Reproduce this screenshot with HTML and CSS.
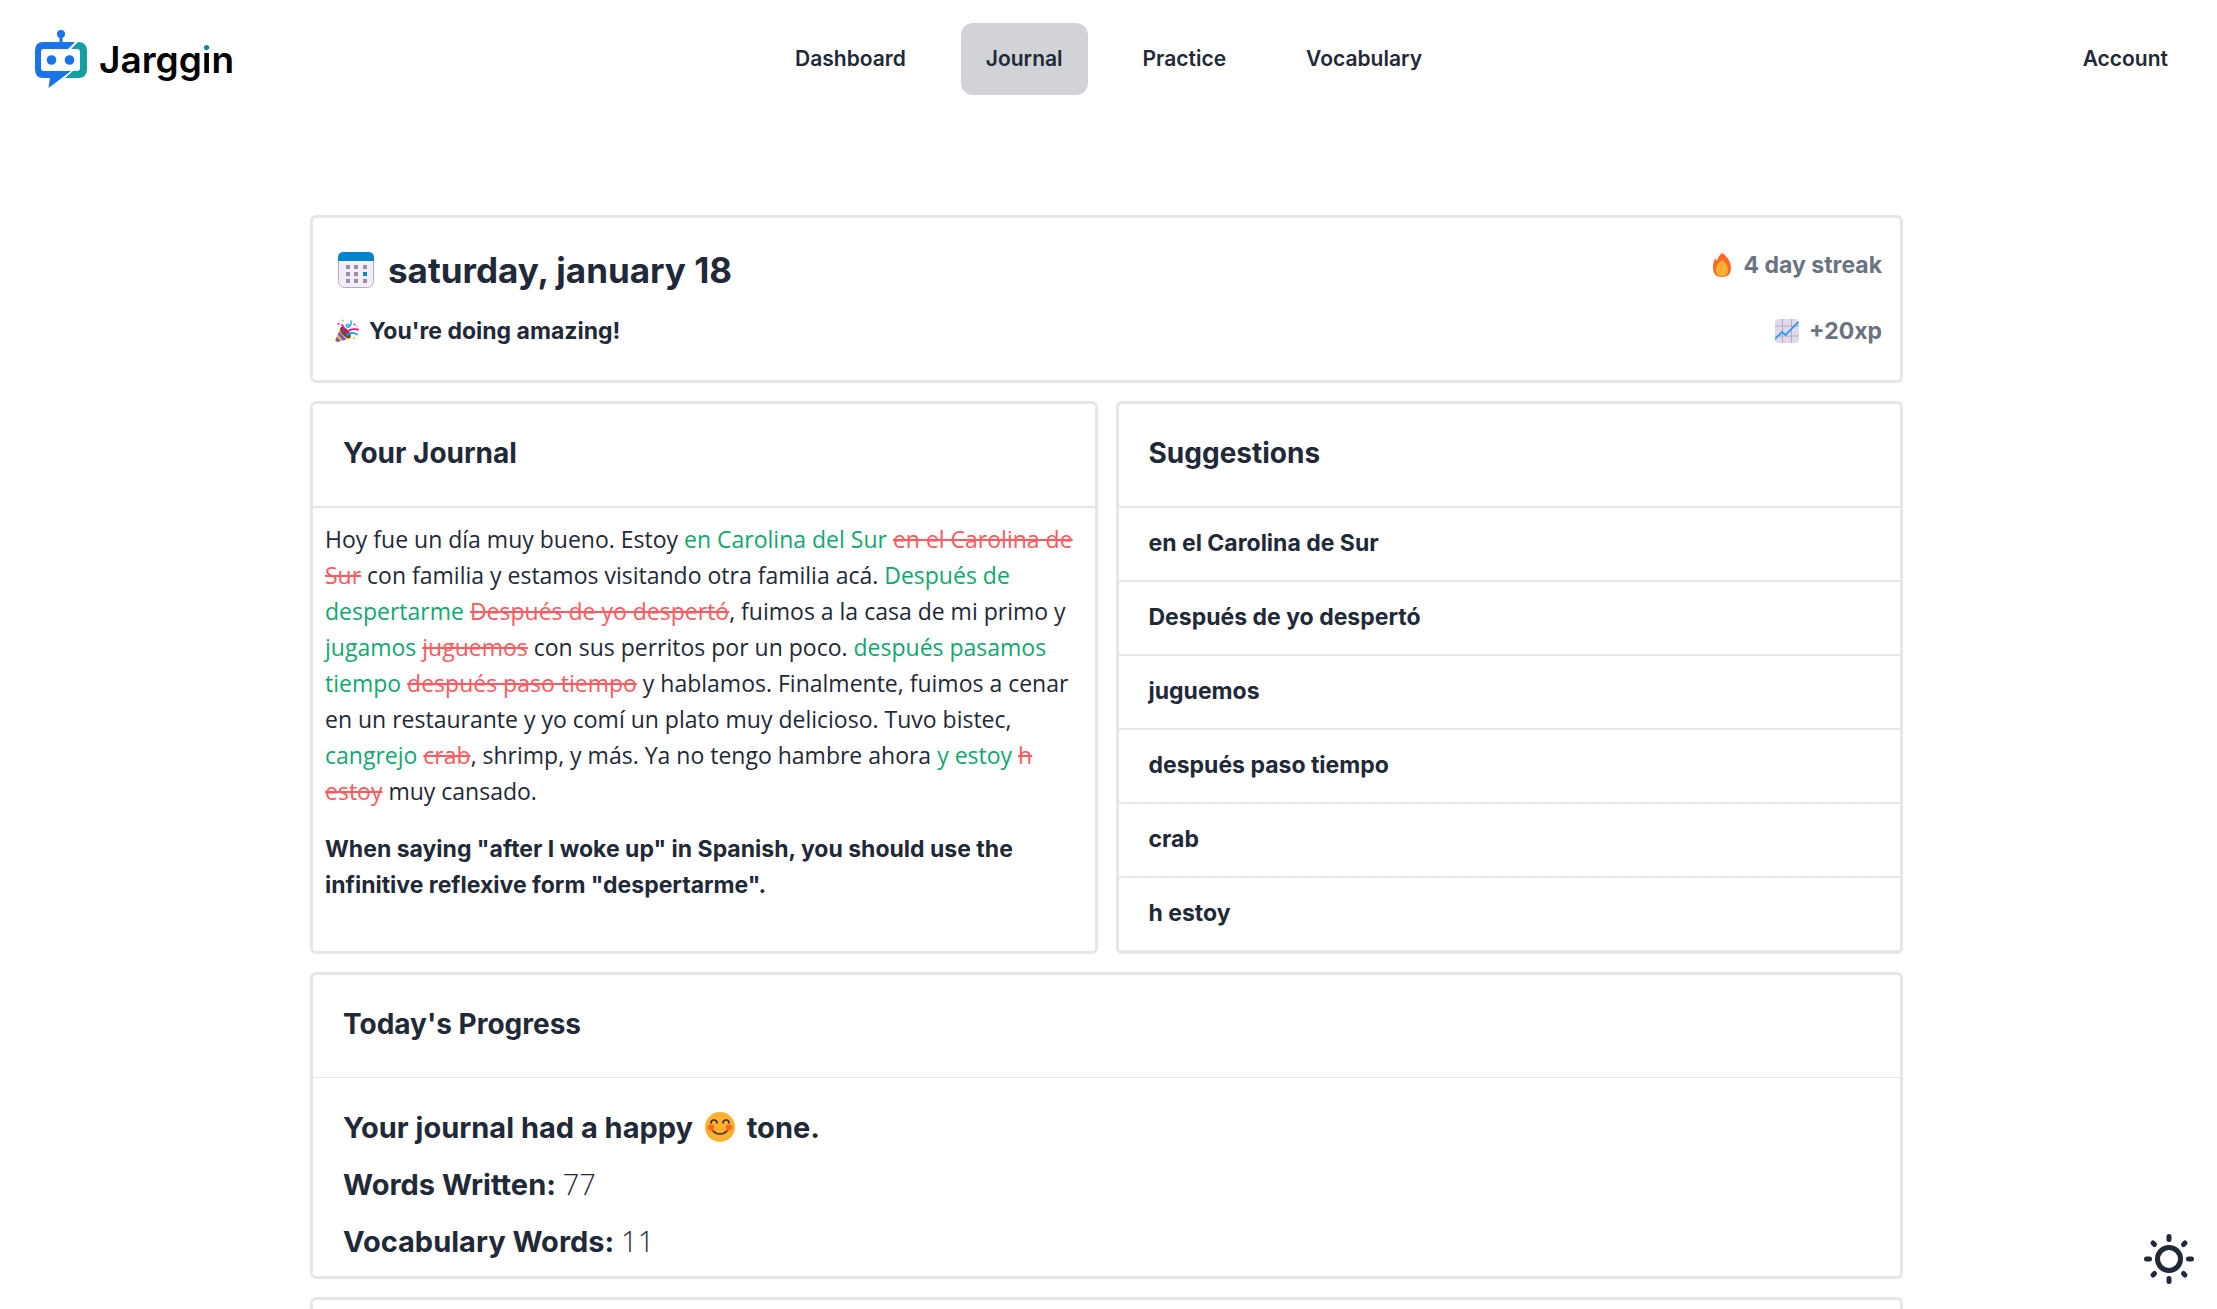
FILE: index.html
```html
<!DOCTYPE html>
<html lang="en">
<head>
<meta charset="utf-8">
<title>Jarggin – Journal</title>
<link rel="stylesheet" href="styles.css">
</head>
<body>
<header class="topbar">
  <a class="brand" href="#">
    <svg class="brand-mark" viewBox="0 0 54 60" aria-hidden="true">
      <circle cx="27" cy="4" r="4" fill="#1a73e8"/>
      <path d="M25.500 5h3v9h-3z" fill="#1a73e8"/>
      <path fill="#1a73e8" fill-rule="evenodd" d="M9 12H41L34 19H10Q7 19 7 22V38Q7 41 10 41H37L14.500 58L16 48H9Q1 48 1 39V21Q1 12 9 12Z"/>
      <path fill="#12a0a4" d="M44 12Q53 12 53 21V39Q53 48 44 48H31L39 41H43Q46 41 46 38V22Q46 19 43 19H37Z"/>
      <circle cx="17.500" cy="30" r="4.800" fill="#1a73e8"/>
      <circle cx="35.500" cy="30" r="4.800" fill="#1a73e8"/>
    </svg>
    <span class="brand-name">Jargg<span class="brand-i">i</span>n</span>
  </a>
  <nav class="nav">
    <a class="nav-link" href="#">Dashboard</a>
    <a class="nav-link nav-link-active" href="#" aria-current="page">Journal</a>
    <a class="nav-link" href="#">Practice</a>
    <a class="nav-link" href="#">Vocabulary</a>
  </nav>
  <a class="nav-link account" href="#">Account</a>
</header>

<main class="page">
  <section class="card summary">
    <div class="summary-main">
      <h1 class="date">
        <svg class="icon-calendar" viewBox="0 0 36 36" aria-hidden="true">
          <rect x=".5" y=".5" width="35" height="35" rx="6" fill="#f3edf8" stroke="#b4acbc"/>
          <path d="M0 9V6Q0 0 6 0H30Q36 0 36 6V9Z" fill="#0084ce"/>
          <g fill="#998ea4"><path d="M8 13h4v4H8zM16 13h4v4h-4zM25 13h4v4h-4zM8 20h4v4H8zM16 20h4v4h-4zM8 27h4v4H8zM16 27h4v4h-4zM25 27h4v4h-4z"/></g>
          <path d="M25 20h4v4h-4z" fill="#0084ce"/>
        </svg>
        saturday, january 18
      </h1>
      <p class="label">
        <svg class="icon-small" viewBox="0 0 24 24" aria-hidden="true">
          <path d="M6 8L16 19L2 23Q0 23 0 21Z" fill="#ffb02e"/>
          <path d="M4 12.500L11 20.500L8 21.500L3 15.500ZM1.800 18L5.500 22.200L2.500 23L.8 21Z" fill="#5e5af0"/>
          <ellipse cx="10.500" cy="13.500" rx="3.500" ry="7" transform="rotate(-42 10.500 13.500)" fill="#6d4534"/>
          <g fill="none" stroke-width="1.800" stroke-linecap="round">
            <path d="M7 6Q10 9 8 12" stroke="#f3128b"/>
            <path d="M11 14Q15 9 23 10.500" stroke="#f3128b"/>
            <path d="M12 16Q17 12 22 15.500" stroke="#00a6ed"/>
            <path d="M16 2Q17 7 13 8.500Q10 7 12 5.500Q15 5 14 8" stroke="#00a6ed" stroke-width="1.300"/>
          </g>
          <g fill="#f3128b"><circle cx="3.500" cy="5" r="1"/><circle cx="19.500" cy="5.500" r="1"/></g>
          <g fill="#ffb02e"><circle cx="8" cy="1.500" r="1"/><circle cx="19" cy="19" r="1"/><circle cx="22" cy="7" r=".8"/></g>
        </svg>
        You're doing amazing!
      </p>
    </div>
    <div class="summary-stats">
      <p class="label stat">
        <svg class="icon-small" viewBox="0 0 24 24" aria-hidden="true">
          <path d="M12 0C15 2 21 7 21 15Q21 24 12 24Q3 24 3 15Q3 8 6 5Q6 7 7 8Q8 3 12 0Z" fill="#ff6723"/>
          <path d="M12 7Q18 11 18 17Q18 23 12 23Q6 23 6 17Q6 11 12 7Z" fill="#ffb02e"/>
        </svg>
        4 day streak
      </p>
      <p class="label stat">
        <svg class="icon-small" viewBox="0 0 24 24" aria-hidden="true">
          <rect width="24" height="24" rx="3.500" fill="#e1d8ec"/>
          <path d="M7.500 0V24M16.500 0V24M0 7H24M0 17H24" stroke="#b4acbc" fill="none"/>
          <path d="M0 20L7 13L10.500 16L23.500 3" stroke="#26a0ee" stroke-width="1.800" fill="none"/>
        </svg>
        +20xp
      </p>
    </div>
  </section>

  <div class="columns">
    <section class="card">
      <h2 class="card-title">Your Journal</h2>
      <div class="journal">
        <p class="entry">Hoy fue un día muy bueno. Estoy <ins>en Carolina del Sur</ins> <del>en el Carolina de Sur</del> con familia y estamos visitando otra familia acá. <ins>Después de despertarme</ins> <del>Después de yo despertó</del>, fuimos a la casa de mi primo y <ins>jugamos</ins> <del>juguemos</del> con sus perritos por un poco. <ins>después pasamos tiempo</ins> <del>después paso tiempo</del> y hablamos. Finalmente, fuimos a cenar en un restaurante y yo comí un plato muy delicioso. Tuvo bistec, <ins>cangrejo</ins> <del>crab</del>, shrimp, y más. Ya no tengo hambre ahora <ins>y estoy</ins> <del>h estoy</del> muy cansado.</p>
        <p class="note">When saying "after I woke up" in Spanish, you should use the infinitive reflexive form "despertarme".</p>
      </div>
    </section>
    <section class="card">
      <h2 class="card-title">Suggestions</h2>
      <ul class="suggestions">
        <li>en el Carolina de Sur</li>
        <li>Después de yo despertó</li>
        <li>juguemos</li>
        <li>después paso tiempo</li>
        <li>crab</li>
        <li>h estoy</li>
      </ul>
    </section>
  </div>

  <section class="card">
    <h2 class="card-title card-title-thin">Today's Progress</h2>
    <div class="progress">
      <p>Your journal had a happy
        <svg class="icon-face" viewBox="0 0 30 30" role="img" aria-label="smiling face">
          <circle cx="15" cy="15" r="15" fill="#ffb02e"/>
          <circle cx="6" cy="15.500" r="3.200" fill="#ff6723"/>
          <circle cx="24" cy="15.500" r="3.200" fill="#ff6723"/>
          <path d="M6 11Q6 8 9 8Q12 8 12 11M18 11Q18 8 21 8Q24 8 24 11M8 19Q11 22 15 22Q19 22 22 19" fill="none" stroke="#402a32" stroke-width="1.600" stroke-linecap="round"/>
        </svg>
        tone.</p>
      <p>Words Written: <span class="value">77</span></p>
      <p>Vocabulary Words: <span class="value">11</span></p>
    </div>
  </section>

  <section class="card card-next"></section>
</main>

<button class="theme" type="button" aria-label="Toggle theme">
  <svg viewBox="0 0 50 50" aria-hidden="true" fill="none" stroke="#1f2937" stroke-width="5" stroke-linecap="round">
    <circle cx="25" cy="25" r="11.500"/>
    <path d="M25 2.500v3M25 44.500v3M2.500 25h3M44.500 25h3M9 9l1.500 1.500M39.500 39.500l1.500 1.500M9 41l1.500-1.500M39.500 10.500l1.500-1.500"/>
  </svg>
</button>
</body>
</html>
```
FILE: styles.css
```css
* {
  box-sizing: border-box;
  margin: 0;
  padding: 0;
}

body {
  display: flex;
  flex-direction: column;
  height: 100vh;
  overflow: hidden;
  background: #fff;
  color: #1f2937;
  font-family: Inter, "Liberation Sans", sans-serif;
  font-weight: 700;
}

a {
  color: inherit;
  text-decoration: none;
}

.topbar {
  display: grid;
  grid-template-columns: 1fr auto 1fr;
  align-items: center;
  flex: none;
  height: 118px;
  padding: 0 24px;
  font-weight: 600;
}

.brand {
  display: flex;
  align-items: center;
  gap: 11px;
  padding: 2px 0 0 10px;
}

.brand-mark {
  width: 54px;
  height: 60px;
}

.brand-name {
  color: #000;
  font-size: 37px;
  line-height: 48px;
}

.brand-i {
  background: linear-gradient(#0d8a8a 16px, #000 16px);
  background-clip: text;
  color: transparent;
}

.nav {
  display: flex;
  gap: 30px;
}

.nav-link {
  padding: 0 25px;
  border-radius: 12px;
  font-size: 21px;
  line-height: 72px;
}

.nav-link-active {
  background: #d2d3d7;
}

.account {
  justify-self: end;
}

.page {
  display: flex;
  flex: 1;
  flex-direction: column;
  gap: 18px;
  min-height: 0;
  padding: 97px 314px 0 310px;
  overflow-y: auto;
  scrollbar-width: none;
}

.card {
  flex: none;
  border: 3px solid #e5e6e6;
  border-radius: 6px;
}

.summary {
  display: flex;
  justify-content: space-between;
  height: 168px;
  padding: 25px 18px 0 22px;
}

.date {
  display: flex;
  align-items: center;
  gap: 14px;
  padding-left: 3px;
  font-size: 35px;
  line-height: 54px;
}

.icon-calendar {
  width: 36px;
  height: 36px;
}

.label {
  display: flex;
  align-items: center;
  gap: 10px;
  font-size: 23px;
  line-height: 36px;
}

.date + .label {
  margin-top: 16px;
}

.icon-small {
  width: 24px;
  height: 24px;
}

.summary-stats {
  display: flex;
  flex-direction: column;
  gap: 30px;
  padding-top: 4px;
}

.stat {
  justify-content: flex-end;
  color: #6b7280;
}

.columns {
  display: grid;
  flex: none;
  grid-template-columns: 1fr 1fr;
  gap: 18px;
}

.card-title {
  padding: 27px 30px 30px;
  border-bottom: 2px solid #e5e6e9;
  font-size: 28px;
  line-height: 45px;
}

.card-title-thin {
  border-bottom-width: 1px;
}

.journal {
  padding: 13px 12px 0;
  font-size: 23px;
  line-height: 36px;
}

.entry {
  font-family: "Open Sans", "Noto Sans", sans-serif;
  font-weight: 400;
}

.entry ins {
  color: #10a870;
  text-decoration: none;
}

.entry del {
  color: #ff5a60;
}

.note {
  margin-top: 22px;
}

.suggestions {
  list-style: none;
}

.suggestions li {
  padding: 17px 30px 19px;
  border-bottom: 2px solid #e5e6e9;
  font-size: 23px;
  line-height: 36px;
}

.suggestions li:last-child {
  border-bottom-width: 1px;
}

.progress {
  display: flex;
  flex-direction: column;
  gap: 12px;
  padding: 27px 30px 12px;
  font-size: 29px;
  line-height: 45px;
}

.icon-face {
  width: 30px;
  height: 30px;
  margin: 0 5px;
  vertical-align: -4px;
}

.value {
  font-family: "Open Sans", "Noto Sans", sans-serif;
  font-weight: 300;
  line-height: 30px;
}

.card-next {
  height: 160px;
}

.theme {
  position: fixed;
  right: 23px;
  bottom: 25px;
  width: 50px;
  height: 50px;
  border: 0;
  background: none;
}
```
